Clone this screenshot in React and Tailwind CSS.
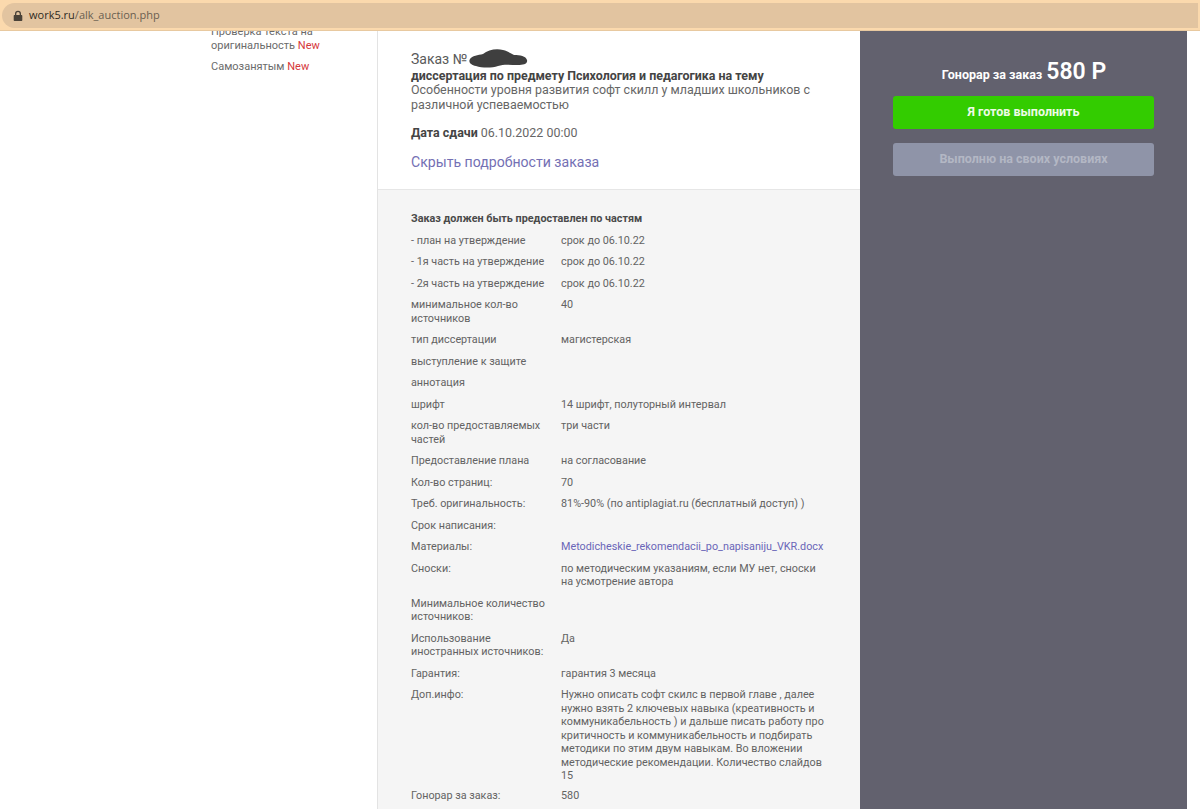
const rows = [
  { label: "- план на утверждение", value: "срок до 06.10.22" },
  { label: "- 1я часть на утверждение", value: "срок до 06.10.22" },
  { label: "- 2я часть на утверждение", value: "срок до 06.10.22" },
  { label: "минимальное кол-во источников", value: "40" },
  { label: "тип диссертации", value: "магистерская" },
  { label: "выступление к защите", value: "" },
  { label: "аннотация", value: "" },
  { label: "шрифт", value: "14 шрифт, полуторный интервал" },
  { label: "кол-во предоставляемых частей", value: "три части" },
  { label: "Предоставление плана", value: "на согласование" },
  { label: "Кол-во страниц:", value: "70" },
  { label: "Треб. оригинальность:", value: "81%-90% (по antiplagiat.ru (бесплатный доступ) )" },
  { label: "Срок написания:", value: "" },
  { label: "Материалы:", value: "Metodicheskie_rekomendacii_po_napisaniju_VKR.docx", link: true },
  { label: "Сноски:", value: "по методическим указаниям, если МУ нет, сноски на усмотрение автора" },
  { label: "Минимальное количество источников:", value: "" },
  { label: "Использование иностранных источников:", value: "Да" },
  { label: "Гарантия:", value: "гарантия 3 месяца" },
  {
    label: "Доп.инфо:",
    value:
      "Нужно описать софт скилс в первой главе , далее нужно взять 2 ключевых навыка (креативность и коммуникабельность ) и дальше писать работу про критичность и коммуникабельность и подбирать методики по этим двум навыкам. Во вложении методические рекомендации. Количество слайдов 15",
  },
  { label: "Гонорар за заказ:", value: "580", last: true },
];

const App = () => {
  return (
    <div className="h-[809px] w-[1200px] overflow-hidden bg-white font-['Roboto',sans-serif] text-[#555555] flex flex-col">
      <div className="h-[31px] shrink-0 bg-[#fbd9ad] border-b border-[#e8c9a0] flex flex-col">
        <div className="mx-0.5 mt-[3px] h-[25px] rounded-l-full bg-[#e2c4a0] flex items-center pl-[10px]">
          <svg width="12" height="12" viewBox="0 0 12 12" fill="#4a4238">
            <path d="M3 5V3.8a3 3 0 0 1 6 0V5h.6c.4 0 .7.3.7.7v4.600c0 .4-.3.7-.7.7H2.400a.7.7 0 0 1-.7-.7V5.700c0-.4.3-.7.7-.7zm1.300 0h3.400V3.800a1.700 1.700 0 0 0-3.400 0z" />
          </svg>
          <span className="ml-[5px] text-[11px] text-[#6a5f50] font-['Open_Sans',sans-serif]">
            <span className="text-[#2f2a22]">work5.ru</span>/alk_auction.php
          </span>
        </div>
      </div>

      <div className="flex flex-1 min-h-0">
        <aside className="w-[378px] shrink-0 border-r border-[#e3e3e3] pl-[211px] pr-[50px] text-[11px] leading-[14px] text-[#6b6b6b] overflow-hidden">
          <div className="-mt-[6px]">
            Проверка текста на оригинальность <span className="text-[#d6383c]">New</span>
          </div>
          <div className="mt-[7px]">
            Самозанятым <span className="text-[#d6383c]">New</span>
          </div>
        </aside>

        <main className="w-[482px] shrink-0 flex flex-col">
          <section className="h-[159px] shrink-0 border-b border-[#e6e6e6] pl-[33px] pr-[40px] pt-[21px]">
            <div className="relative text-[14px] leading-[15px] text-[#5a5a5a]">
              Заказ №
              <svg className="absolute left-[57px] -top-[4px]" width="60" height="22" viewBox="0 0 60 22" fill="#3f3f3f">
                <path d="M2 11C4 8 10 7 15 6C20 2 28 0 35 2C40 3 43 6 46 7C52 7 58 8 59 12C60 16 55 17 50 17C42 17 36 16 30 18C24 20 14 20 8 18C3 17 0 14 2 11Z" />
              </svg>
            </div>
            <div className="mt-[1px] text-[12.45px] leading-[15px] font-bold text-[#444444]">
              диссертация по предмету Психология и педагогика на тему
            </div>
            <div className="text-[12.45px] leading-[14.5px] text-[#666666]">
              Особенности уровня развития софт скилл у младших школьников с различной успеваемостью
            </div>
            <div className="mt-[13px] text-[12.45px] leading-[15px] text-[#666666]">
              <span className="font-bold text-[#444444]">Дата сдачи</span> 06.10.2022 00:00
            </div>
            <div className="mt-[13px] text-[14.1px] leading-[18px] text-[#7470b4]">Скрыть подробности заказа</div>
          </section>

          <section className="flex-1 bg-[#f5f5f5] pl-[33px] pr-[36px] pt-[22px] text-[10.8px] leading-[13.5px] text-[#636363]">
            <div className="font-bold text-[#4a4a4a] mb-2">Заказ должен быть предоставлен по частям</div>
            <div className="flex flex-col gap-2">
              {rows.map((row) => (
                <div key={row.label} className={row.last ? "flex -mt-[2px]" : "flex"}>
                  <div className="w-[150px] shrink-0 pr-[10px]">{row.label}</div>
                  <div className={row.link ? "flex-1 text-[#6a66b8]" : "flex-1"}>{row.value}</div>
                </div>
              ))}
            </div>
          </section>
        </main>

        <aside className="w-[327px] shrink-0 bg-[#62616e] px-[33px] pt-[28px]">
          <div className="flex items-baseline justify-center text-white font-bold pl-[1px]">
            <span className="text-[12.5px]">Гонорар за заказ</span>
            <span className="ml-[4px] text-[23px] leading-[26px] font-semibold">580 Р</span>
          </div>
          <button className="mt-[11px] block w-full h-[33px] rounded-[3px] bg-[#33cc00] text-[12.5px] font-bold text-[#eefbe6]">
            Я готов выполнить
          </button>
          <button className="mt-[14px] block w-full h-[33px] rounded-[3px] bg-[#8f94a8] text-[12.5px] font-bold text-[#b3b7c4]">
            Выполню на своих условиях
          </button>
        </aside>
      </div>
    </div>
  );
};

export default App;
